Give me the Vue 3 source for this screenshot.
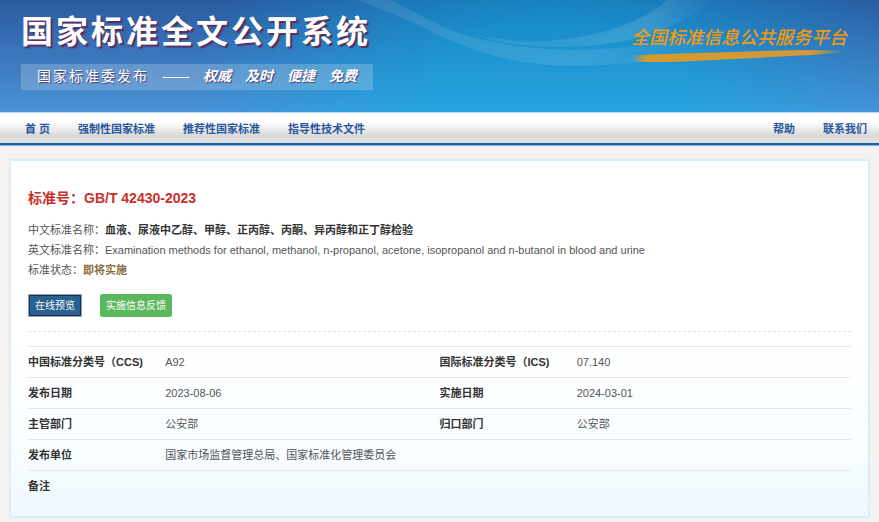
<script setup>
const mainNav = ['首 页', '强制性国家标准', '推荐性国家标准', '指导性技术文件']
const sideNav = ['帮助', '联系我们']

const rows = [
  [['中国标准分类号（CCS)', 'A92'], ['国际标准分类号（ICS)', '07.140']],
  [['发布日期', '2023-08-06'], ['实施日期', '2024-03-01']],
  [['主管部门', '公安部'], ['归口部门', '公安部']],
  [['发布单位', '国家市场监督管理总局、国家标准化管理委员会']],
  [['备注', '']],
]
</script>

<template>
  <div class="page">
    <header class="banner">
      <svg class="waves" viewBox="0 0 879 112" preserveAspectRatio="none" aria-hidden="true">
        <defs>
          <linearGradient id="band" x1="0" y1="0" x2="1" y2="0">
            <stop offset="0" stop-color="#fff" stop-opacity="0.09" />
            <stop offset="0.6" stop-color="#fff" stop-opacity="0.1" />
            <stop offset="1" stop-color="#fff" stop-opacity="0" />
          </linearGradient>
          <linearGradient id="sweep" x1="0" y1="0" x2="1" y2="0">
            <stop offset="0" stop-color="#fff" stop-opacity="0.06" />
            <stop offset="0.7" stop-color="#fff" stop-opacity="0.13" />
            <stop offset="1" stop-color="#fff" stop-opacity="0" />
          </linearGradient>
        </defs>
        <path d="M348 -4 Q420 24 440 36 Q510 68 580 66 Q660 64 740 46 L740 26 Q650 50 570 50 Q500 48 450 30 Q420 16 384 -4 Z" fill="url(#band)" />
        <path d="M472 34 Q520 44 550 41 Q630 34 670 -2 L716 -2 Q670 36 600 45 Q520 52 472 34 Z" fill="url(#sweep)" />
      </svg>
      <div class="brand">
        <h1 class="title">国家标准全文公开系统</h1>
        <p class="tagline">
          <span>国家标准委发布</span>
          <span class="dash"></span>
          <span class="script">权威</span>
          <span class="script">及时</span>
          <span class="script">便捷</span>
          <span class="script">免费</span>
        </p>
      </div>
      <a class="platform" href="#">
        <span class="platform-name">全国标准信息公共服务平台</span>
        <svg class="stroke" viewBox="0 0 218 14" preserveAspectRatio="none" aria-hidden="true">
          <defs>
            <linearGradient id="brush" x1="0" y1="0" x2="1" y2="0">
              <stop offset="0" stop-color="#d69a2c" stop-opacity="0" />
              <stop offset="0.07" stop-color="#d69a2c" />
              <stop offset="0.85" stop-color="#d2983a" />
              <stop offset="1" stop-color="#d2983a" stop-opacity="0" />
            </linearGradient>
          </defs>
          <path d="M0 6 Q10 5 45 4 L170 0 Q200 0 217 1 Q208 4 170 6 L60 12 Q18 14 4 12 Z" fill="url(#brush)" />
        </svg>
      </a>
    </header>

    <nav class="nav">
      <div class="links">
        <a v-for="item in mainNav" :key="item" href="#">{{ item }}</a>
      </div>
      <div class="links">
        <a v-for="item in sideNav" :key="item" href="#">{{ item }}</a>
      </div>
    </nav>

    <main class="card">
      <h2 class="number">标准号：GB/T 42430-2023</h2>
      <p class="line">中文标准名称：<b>血液、尿液中乙醇、甲醇、正丙醇、丙酮、异丙醇和正丁醇检验</b></p>
      <p class="line">英文标准名称：Examination methods for ethanol, methanol, n-propanol, acetone, isopropanol and n-butanol in blood and urine</p>
      <p class="line">标准状态：<span class="status">即将实施</span></p>
      <div class="actions">
        <button type="button" class="btn primary">在线预览</button>
        <button type="button" class="btn success">实施信息反馈</button>
      </div>
      <table class="info">
        <colgroup>
          <col class="narrow" /><col class="wide" /><col class="narrow" /><col class="wide" />
        </colgroup>
        <tbody>
          <tr v-for="row in rows" :key="row[0][0]">
            <template v-for="[label, value] in row" :key="label">
              <th scope="row">{{ label }}</th>
              <td :colspan="row.length === 1 ? 3 : 1">{{ value }}</td>
            </template>
          </tr>
        </tbody>
      </table>
    </main>
  </div>
</template>

<style>
body {
  margin: 0;
  background: #f3f2f0;
}
</style>

<style scoped>
.page {
  font-family: "Liberation Sans", "Noto Sans CJK SC", sans-serif;
  font-size: 11px;
  color: #555;
}
.banner {
  position: relative;
  display: flex;
  justify-content: space-between;
  align-items: flex-start;
  height: 112px;
  padding: 0 32px 0 21px;
  box-sizing: border-box;
  overflow: hidden;
  background: linear-gradient(#2b5aa0, #4b92d6);
}
.banner::before {
  content: "";
  position: absolute;
  inset: 0;
  background: linear-gradient(#1586c2, #27a4e0);
  mask-image: radial-gradient(ellipse 42% 240% at 63% 100%, #000 35%, transparent 100%);
}
.waves {
  position: absolute;
  inset: 0;
  width: 100%;
  height: 100%;
}
.brand,
.platform {
  position: relative;
}
.title {
  margin: 12px 0 0;
  font-size: 32px;
  line-height: 40px;
  letter-spacing: 3px;
  font-weight: 700;
  color: #fff;
  text-shadow: 2px 2px 1px #5b2d5e;
  white-space: nowrap;
}
.tagline {
  display: flex;
  align-items: center;
  gap: 14px;
  width: 352px;
  height: 26px;
  margin: 12px 0 0;
  padding: 0 16px;
  box-sizing: border-box;
  background: rgba(255, 255, 255, 0.2);
  font-family: "Liberation Serif", "Noto Sans CJK SC", serif;
  font-size: 14px;
  line-height: 20px;
  letter-spacing: 2px;
  color: #fff;
  text-shadow: 1px 1px 1px #4b3c70;
  white-space: nowrap;
}
.dash {
  width: 28px;
  height: 1px;
  background: #fff;
}
.script {
  font-style: italic;
  font-weight: 700;
  letter-spacing: 0;
}
.platform {
  display: flex;
  flex-direction: column;
  margin-top: 26px;
  color: #f39a10;
  text-decoration: none;
}
.platform-name {
  font-size: 18px;
  line-height: 24px;
  font-style: italic;
  font-weight: 500;
  white-space: nowrap;
}
.stroke {
  width: 100%;
  height: 13px;
}
.nav {
  display: flex;
  justify-content: space-between;
  height: 30px;
  padding: 0 12px 0 25px;
  border-top: 1px solid #b5d8f2;
  border-bottom: 2px solid #1c5fa4;
  box-shadow: 0 1px 0 #7db4e2;
  background: linear-gradient(#fff 30%, #dadada 75%, #e2e2e2);
}
.links {
  display: flex;
  align-items: center;
  gap: 28px;
}
.links a {
  color: #2a579c;
  font-weight: 700;
  text-decoration: none;
  white-space: nowrap;
}
.card {
  margin: 14px 9px 4px;
  padding: 25px 17px 15px;
  border: 2px solid #d9eefa;
  border-radius: 2px;
  background: linear-gradient(#fff 50%, #f8fdff 80%, #eef8fe);
}
.number {
  margin: 0 0 10px;
  font-size: 14px;
  line-height: 24px;
  font-weight: 700;
  color: #c7302b;
}
.line {
  margin: 0;
  line-height: 20px;
}
.line b {
  color: #333;
}
.status {
  color: #8a6d3b;
  font-weight: 700;
}
.actions {
  display: flex;
  gap: 18px;
  padding: 14px 0;
  border-bottom: 1px dashed #e2e2e2;
}
.btn {
  height: 23px;
  padding: 0 5px;
  border: 1px solid #5cb85c;
  border-radius: 2px;
  font-family: inherit;
  font-size: 10px;
  line-height: 16px;
  color: #fff;
}
.primary {
  border: 2px solid #16304d;
  outline: 1px solid #8fa3b5;
  outline-offset: -1px;
  background: #286090;
}
.success {
  background: #5cb85c;
}
.info {
  width: 100%;
  margin-top: 14px;
  border-collapse: collapse;
  table-layout: fixed;
}
.narrow {
  width: calc(100% / 6);
}
.wide {
  width: calc(100% / 3);
}
.info th,
.info td {
  height: 30px;
  padding: 0;
  border-top: 1px solid #e4e7e8;
  line-height: 16px;
  text-align: left;
  white-space: nowrap;
}
.info th {
  color: #333;
}
</style>
